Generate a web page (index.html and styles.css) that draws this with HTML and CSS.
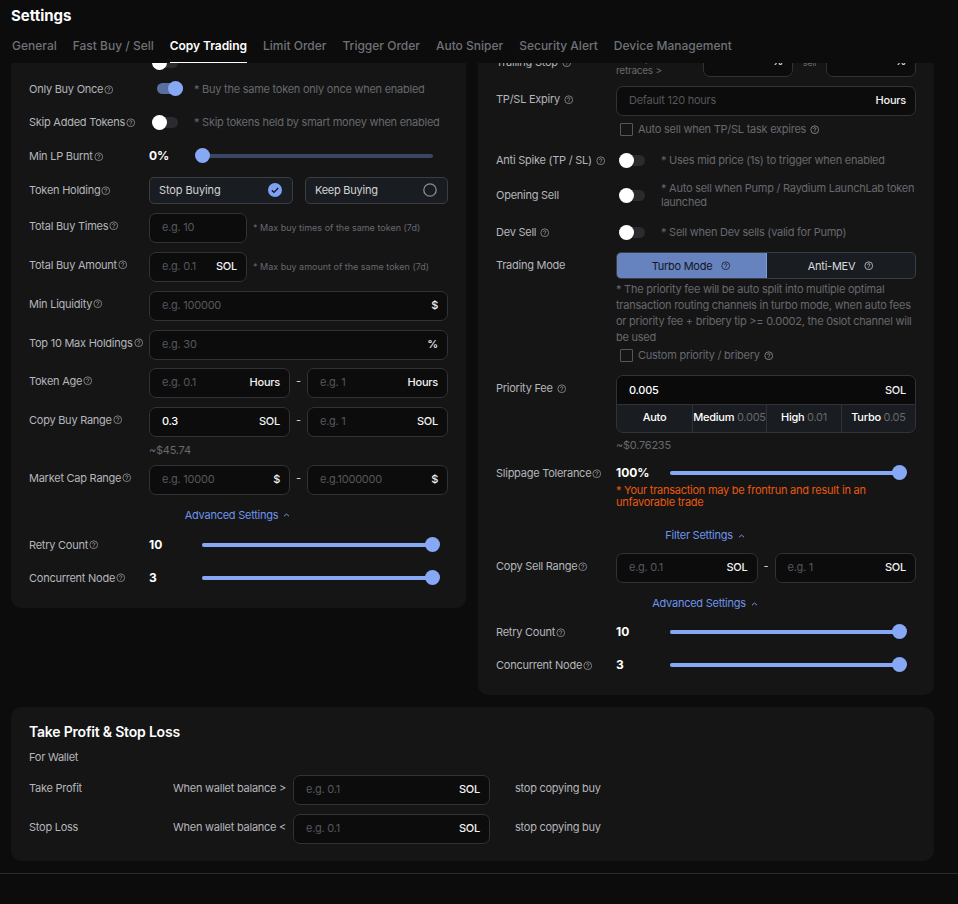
FILE: index.html
```html
<!DOCTYPE html>
<html lang="en">
<head>
<meta charset="utf-8">
<title>Settings</title>
<link rel="stylesheet" href="styles.css">
</head>
<body>
<svg class="defs" width="0" height="0" aria-hidden="true"><defs>
<symbol id="q" viewBox="0 0 10 10"><circle cx="5" cy="5" r="4.1" fill="none" stroke="currentColor" stroke-width=".8"/><path d="M3.7 4c0-.8.6-1.2 1.3-1.2S6.3 3.2 6.3 4c0 1-1.3 1-1.3 2" fill="none" stroke="currentColor" stroke-width=".8"/><circle cx="5" cy="7.2" r=".5" fill="currentColor"/></symbol>
</defs></svg>
<header class="top">
  <h1 class="title">Settings</h1>
  <nav class="tabs">
    <a class="tab">General</a><a class="tab">Fast Buy / Sell</a><a class="tab active">Copy Trading</a><a class="tab">Limit Order</a><a class="tab">Trigger Order</a><a class="tab">Auto Sniper</a><a class="tab">Security Alert</a><a class="tab">Device Management</a>
  </nav>
</header>
<main class="scroller">
  <div class="scroll-inner">
    <div class="columns">
      <section class="card left">
        <div class="row r-clip"><span class="label"></span><span class="toggle off"><i></i></span></div>
        <div class="row r-toggle"><span class="label">Only Buy Once<svg class="q"><use href="#q"/></svg></span><span class="toggle on"><i></i></span><span class="hint">* Buy the same token only once when enabled</span></div>
        <div class="row r-toggle"><span class="label">Skip Added Tokens<svg class="q"><use href="#q"/></svg></span><span class="toggle off"><i></i></span><span class="hint">* Skip tokens held by smart money when enabled</span></div>
        <div class="row r-toggle"><span class="label">Min LP Burnt<svg class="q"><use href="#q"/></svg></span><span class="val">0%</span><div class="slider"><b style="width:0%"></b><i style="left:0%"></i></div></div>
        <div class="row r-hold"><span class="label">Token Holding<svg class="q"><use href="#q"/></svg></span>
          <div class="choice c-stop"><span>Stop Buying</span><svg width="14" height="14" viewBox="0 0 14 14"><circle cx="7" cy="7" r="7" fill="#7ea2f3"/><path d="M3.8 7.2l2.2 2.2 4.2-4.4" fill="none" stroke="#14161b" stroke-width="1.3"/></svg></div>
          <div class="choice c-keep"><span>Keep Buying</span><svg width="14" height="14" viewBox="0 0 14 14"><circle cx="7" cy="7" r="6.2" fill="none" stroke="#8a8d92" stroke-width="1.3"/></svg></div>
        </div>
        <div class="row field"><span class="label">Total Buy Times<svg class="q"><use href="#q"/></svg></span><div class="input w98"><span class="ph">e.g. 10</span></div><span class="note">* Max buy times of the same token (7d)</span></div>
        <div class="row field"><span class="label">Total Buy Amount<svg class="q"><use href="#q"/></svg></span><div class="input w98"><span class="ph">e.g. 0.1</span><span class="unit">SOL</span></div><span class="note">* Max buy amount of the same token (7d)</span></div>
        <div class="row field"><span class="label">Min Liquidity<svg class="q"><use href="#q"/></svg></span><div class="input grow"><span class="ph">e.g. 100000</span><span class="unit">$</span></div></div>
        <div class="row field"><span class="label">Top 10 Max Holdings<svg class="q"><use href="#q"/></svg></span><div class="input grow"><span class="ph">e.g. 30</span><span class="unit">%</span></div></div>
        <div class="row field f-age"><span class="label">Token Age<svg class="q"><use href="#q"/></svg></span><div class="input grow"><span class="ph">e.g. 0.1</span><span class="unit">Hours</span></div><span class="dash">-</span><div class="input grow"><span class="ph">e.g. 1</span><span class="unit">Hours</span></div></div>
        <div class="row field"><span class="label">Copy Buy Range<svg class="q"><use href="#q"/></svg></span><div class="input grow"><span class="filled">0.3</span><span class="unit">SOL</span></div><span class="dash">-</span><div class="input grow"><span class="ph">e.g. 1</span><span class="unit">SOL</span></div></div>
        <div class="usd u-left">~$45.74</div>
        <div class="row field"><span class="label">Market Cap Range<svg class="q"><use href="#q"/></svg></span><div class="input grow"><span class="ph">e.g. 10000</span><span class="unit">$</span></div><span class="dash">-</span><div class="input grow"><span class="ph">e.g.1000000</span><span class="unit">$</span></div></div>
        <div class="more m-left">Advanced Settings<svg width="7" height="4" viewBox="0 0 7 4"><path d="M1 3.2L3.5 1 6 3.2" fill="none" stroke="currentColor"/></svg></div>
        <div class="row r-retry"><span class="label">Retry Count<svg class="q"><use href="#q"/></svg></span><span class="val v-big">10</span><div class="slider"><b style="width:100%"></b><i style="left:100%"></i></div></div>
        <div class="row r-node"><span class="label">Concurrent Node<svg class="q"><use href="#q"/></svg></span><span class="val v-big">3</span><div class="slider"><b style="width:100%"></b><i style="left:100%"></i></div></div>
      </section>

      <section class="card right">
        <div class="row r-trail">
          <span class="label">Trailing Stop<svg class="q qs"><use href="#q"/></svg></span>
          <span class="trail-note">When price<br>retraces &gt;</span>
          <div class="input t-in"><span class="unit">%</span></div>
          <span class="trail-sell">sell</span>
          <div class="input t-in"><span class="unit">%</span></div>
        </div>
        <div class="row r-exp"><span class="label">TP/SL Expiry<svg class="q qs"><use href="#q"/></svg></span><div class="input grow"><span class="ph">Default 120 hours</span><span class="unit">Hours</span></div></div>
        <div class="check c-auto"><span class="box"></span>Auto sell when TP/SL task expires<svg class="q qs"><use href="#q"/></svg></div>
        <div class="row r-anti"><span class="label">Anti Spike (TP / SL)<svg class="q qs"><use href="#q"/></svg></span><span class="toggle off rt"><i></i></span><span class="hint">* Uses mid price (1s) to trigger when enabled</span></div>
        <div class="row r-open"><span class="label">Opening Sell</span><span class="toggle off rt"><i></i></span><span class="hint">* Auto sell when Pump / Raydium LaunchLab token launched</span></div>
        <div class="row r-dev"><span class="label">Dev Sell<svg class="q qs"><use href="#q"/></svg></span><span class="toggle off rt"><i></i></span><span class="hint">* Sell when Dev sells (valid for Pump)</span></div>
        <div class="row r-mode"><span class="label">Trading Mode</span>
          <div class="mode"><span class="m-btn m-on">Turbo Mode<svg class="q qm"><use href="#q"/></svg></span><span class="m-btn">Anti-MEV<svg class="q qm"><use href="#q"/></svg></span></div>
        </div>
        <p class="para">* The priority fee will be auto split into multiple optimal transaction routing channels in turbo mode, when auto fees or priority fee + bribery tip &gt;= 0.0002, the 0slot channel will be used</p>
        <div class="check c-custom"><span class="box"></span>Custom priority / bribery<svg class="q qs"><use href="#q"/></svg></div>
        <div class="row r-fee"><span class="label">Priority Fee<svg class="q qs"><use href="#q"/></svg></span>
          <div class="fee">
            <div class="fee-top"><span class="filled">0.005</span><span class="unit">SOL</span></div>
            <div class="fee-opts"><span class="opt o1">Auto</span><span class="opt o2">Medium <em>0.005</em></span><span class="opt o3">High <em>0.01</em></span><span class="opt o4">Turbo <em>0.05</em></span></div>
          </div>
        </div>
        <div class="usd u-right">~$0.76235</div>
        <div class="row r-slip"><span class="label">Slippage Tolerance<svg class="q"><use href="#q"/></svg></span><span class="val">100%</span><div class="slider"><b style="width:100%"></b><i style="left:100%"></i></div></div>
        <p class="warn">* Your transaction may be frontrun and result in an unfavorable trade</p>
        <div class="more m-filter">Filter Settings<svg width="7" height="4" viewBox="0 0 7 4"><path d="M1 3.2L3.5 1 6 3.2" fill="none" stroke="currentColor"/></svg></div>
        <div class="row field f-sell"><span class="label">Copy Sell Range<svg class="q"><use href="#q"/></svg></span><div class="input grow"><span class="ph">e.g. 0.1</span><span class="unit">SOL</span></div><span class="dash">-</span><div class="input grow"><span class="ph">e.g. 1</span><span class="unit">SOL</span></div></div>
        <div class="more m-adv">Advanced Settings<svg width="7" height="4" viewBox="0 0 7 4"><path d="M1 3.2L3.5 1 6 3.2" fill="none" stroke="currentColor"/></svg></div>
        <div class="row r-retry2"><span class="label">Retry Count<svg class="q"><use href="#q"/></svg></span><span class="val v-big">10</span><div class="slider"><b style="width:100%"></b><i style="left:100%"></i></div></div>
        <div class="row r-node"><span class="label">Concurrent Node<svg class="q"><use href="#q"/></svg></span><span class="val v-big">3</span><div class="slider"><b style="width:100%"></b><i style="left:100%"></i></div></div>
      </section>
    </div>

    <section class="card bottom">
      <h2 class="sub">Take Profit &amp; Stop Loss</h2>
      <div class="for">For Wallet</div>
      <div class="row b-row"><span class="b-name">Take Profit</span><span class="b-when">When wallet balance &gt;</span><div class="input b-in"><span class="ph">e.g. 0.1</span><span class="unit">SOL</span></div><span class="b-end">stop copying buy</span></div>
      <div class="row b-row"><span class="b-name">Stop Loss</span><span class="b-when">When wallet balance &lt;</span><div class="input b-in"><span class="ph">e.g. 0.1</span><span class="unit">SOL</span></div><span class="b-end">stop copying buy</span></div>
    </section>
  </div>
</main>
<footer class="foot"></footer>
</body>
</html>
```

FILE: styles.css
```css
* { box-sizing: border-box; }
html, body { height: 100%; }
body {
  margin: 0;
  background: #0c0c0d;
  color: #b4b6ba;
  font-family: Inter, "Liberation Sans", sans-serif;
  font-size: 11px;
  line-height: 14px;
  letter-spacing: -.25px;
  overflow: hidden;
  display: flex;
  flex-direction: column;
}
.defs { position: absolute; }

/* header */
.top { height: 63px; flex: none; padding: 0 0 0 12px; }
.title { margin: 0 0 0 -1px; padding-top: 7px; height: 31px; font-size: 15px; line-height: 18px; font-weight: 700; color: #fff; letter-spacing: 0; }
.tabs { display: flex; gap: 16px; height: 32px; }
.tab { font-size: 12px; line-height: 16px; padding-top: 7px; color: #6f7276; font-weight: 500; white-space: nowrap; height: 32px; letter-spacing: 0; }
.tab.active { color: #fff; font-weight: 600; border-bottom: 1px solid #fff; letter-spacing: -.05px; }

/* scroll area */
.scroller { height: 810px; flex: none; overflow: hidden; padding-left: 11px; }
.scroll-inner { width: 923px; margin-top: -20px; }
.columns { display: flex; gap: 12px; align-items: flex-start; }
.card { background: #151516; border-radius: 10px; }
.left { width: 455px; padding: 0 18px 21px; }
.right { width: 456px; padding: 0 18px 21px; }
.bottom { margin-top: 12px; height: 154px; padding: 16px 18px 0; }

/* rows */
.row { display: flex; align-items: center; }
.label { flex: none; width: 120px; color: #b4b6ba; white-space: nowrap; display: flex; align-items: center; font-size: 11px; }
.q { width: 9.5px; height: 9.5px; color: #9a9c9f; flex: none; margin-top: 1px; margin-left: 1px; }
.qs { margin-left: 4px; }
.qm { margin-left: 9px; color: #d5d7da; }

.left .r-clip { margin-top: 11px; margin-bottom: 2px; height: 16px; }
.r-toggle { height: 33.5px; }
.r-hold { height: 27px; margin-top: 4px; }
.field { height: 30px; margin-top: 9px; align-items: flex-start; }
.field .label { padding-top: 6px; }
.f-age { margin-top: 8px; }

/* toggles */
.toggle { display: block; position: relative; flex: none; width: 26px; height: 11px; background: #2a2b2e; border-radius: 6px; }
.toggle i { position: absolute; top: -2px; width: 15px; height: 15px; border-radius: 50%; background: #fff; left: 0; }
.toggle.on { background: #5a6f9f; margin-left: 8px; margin-right: 11px; }
.toggle.on i { left: 11px; background: #86a8f5; }
.toggle.off { margin-left: 3px; margin-right: 16px; }
.hint { color: #66696d; font-size: 11px; line-height: 14px; }

/* values and sliders */
.val { flex: none; width: 53px; color: #fff; font-weight: 700; font-size: 12px; letter-spacing: 0; }
.slider { position: relative; width: 231px; height: 4px; background: #3a4663; border-radius: 2px; }
.right .slider { width: 229px; margin-left: 1px; }
.slider b { display: block; height: 4px; border-radius: 2px; background: #86a8f5; }
.slider i { position: absolute; top: -6px; width: 15px; height: 15px; margin-left: -7.5px; border-radius: 50%; background: #86a8f5; }
.left .slider b[style*="100%"] + i { margin-left: -8.5px; }

/* choices */
.choice { height: 27px; border: 1px solid #3a3d42; border-radius: 5px; background: #191c20; display: flex; align-items: center; justify-content: space-between; padding: 0 10px 0 9px; color: #d2d4d7; }
.c-stop { width: 144px; letter-spacing: -.1px; }
.c-keep { width: 143px; margin-left: 12px; }

/* inputs */
.input { height: 30px; display: flex; align-items: center; justify-content: space-between; gap: 4px; border: 1px solid #303236; border-radius: 7px; background: #0c0c0d; padding: 0 9px 2px 12px; min-width: 0; }
.grow { flex: 1 1 0; }
.w98 { width: 98px; flex: none; }
.ph { color: #55575b; white-space: nowrap; }
.unit { margin-left: auto; color: #f2f2f3; font-weight: 500; white-space: nowrap; }
.filled { color: #fff; font-weight: 500; }
.note { color: #66696d; font-size: 9px; margin-left: 6px; white-space: nowrap; padding-top: 8px; letter-spacing: 0; }
.dash { flex: none; width: 17px; text-align: center; color: #d5d7da; padding-top: 6px; }
.usd { color: #66696d; margin-left: 120px; line-height: 14px; margin-top: 6px; }
.u-left { margin-bottom: 0; height: 13px; }
.more { color: #6f93ea; display: flex; align-items: center; justify-content: center; gap: 5px; padding-right: 2px; }
.more svg { margin-top: 1px; }
.m-left { margin-top: 13px; height: 14px; }
.r-retry { height: 18px; margin-top: 14px; }
.r-node { height: 18px; margin-top: 15px; }
.r-retry2 { height: 18px; margin-top: 13px; }

/* right column */
.r-trail { height: 34px; align-items: flex-start; }
.r-trail .label { padding-top: 12px; }
.trail-note { width: 87px; flex: none; color: #66696d; font-size: 10px; line-height: 12px; padding-top: 9px; }
.trail-sell { flex: none; width: 33px; text-align: center; color: #66696d; font-size: 9px; padding-top: 13px; }
.t-in { width: 90px; height: 30px; flex: none; margin-top: 4px; }
.r-exp { height: 30px; margin-top: 9px; align-items: flex-start; }
.r-exp .label { padding-top: 6px; }
.check { display: flex; align-items: center; margin-left: 124px; color: #66696d; }
.box { width: 13px; height: 13px; border: 1px solid #55575b; border-radius: 1px; margin-right: 5px; flex: none; }
.c-auto { margin-top: 6px; height: 14px; }
.r-anti { height: 18px; margin-top: 15px; }
.r-open { height: 30px; margin-top: 11px; }
.r-dev { height: 18px; margin-top: 13px; }
.r-mode { height: 27px; margin-top: 11px; align-items: flex-start; }
.r-mode .label { padding-top: 6px; }
.mode { flex: 1; display: flex; height: 27px; border: 1px solid #3a3d42; border-radius: 5px; background: #191c20; overflow: hidden; }
.m-btn { flex: 1; display: flex; align-items: center; justify-content: center; color: #d8dadd; }
.m-on { background: #6682bf; color: #14161b; border-right: 1px solid #7c9be0; }
.m-on .qm { color: #14161b; }
.para { margin: 2px 0 0 120px; line-height: 16px; color: #66696d; }
.c-custom { margin-top: 3px; height: 14px; }
.r-fee { align-items: flex-start; margin-top: 13px; }
.r-fee .label { padding-top: 6px; }
.fee { flex: 1; border: 1px solid #303236; border-radius: 7px; overflow: hidden; height: 58px; background: #191c20; }
.fee-top { height: 28px; display: flex; align-items: center; padding: 0 9px 0 12px; background: #0a0a0b; }
.fee-opts { display: flex; height: 28px; border-top: 1px solid #303236; }
.opt { display: flex; align-items: center; justify-content: center; color: #fff; font-weight: 500; white-space: pre; width: 75px; padding-bottom: 3px; }
.o1 { width: 75px; } .o2 { width: 74px; } .o3 { width: 75px; }
.o4 { flex: 1; }
.opt + .opt { border-left: 1px solid #303236; }
.opt em { font-style: normal; font-weight: 400; color: #66696d; }
.u-right { margin-top: 5px; }
.r-slip { height: 18px; margin-top: 12px; }
.warn { margin: 0 0 0 120px; color: #e8590c; line-height: 12px; padding-top: 2px; }
.m-filter { margin-top: 20px; height: 14px; }
.f-sell { margin-top: 11px; }
.m-adv { margin-top: 13px; height: 14px; }

/* bottom */
.sub { margin: 0; font-size: 14px; line-height: 18px; font-weight: 600; color: #fff; letter-spacing: -.2px; }
.for { margin-top: 9px; height: 14px; color: #b4b6ba; }
.b-row { margin-top: 9px; height: 30px; align-items: flex-start; }
.for + .b-row { margin-top: 11px; }
.b-name { width: 144px; flex: none; padding-top: 6px; }
.b-when { width: 120px; flex: none; padding-top: 6px; white-space: nowrap; }
.b-in { width: 197px; flex: none; }
.b-end { margin-left: 25px; padding-top: 6px; }

/* footer */
.foot { flex: 1; border-top: 1px solid #2a2b2e; }
```
